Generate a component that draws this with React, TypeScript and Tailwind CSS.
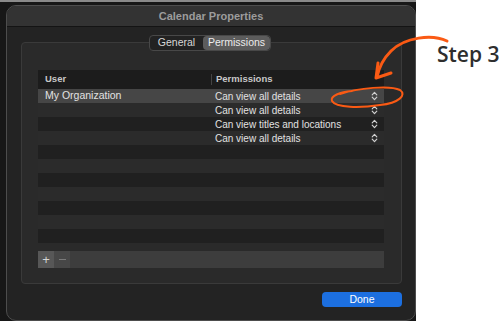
import React from 'react';

const rows = [
  { user: 'My Organization', perm: 'Can view all details' },
  { user: '', perm: 'Can view all details' },
  { user: '', perm: 'Can view titles and locations' },
  { user: '', perm: 'Can view all details' },
];

const Stepper: React.FC = () => (
  <svg width="7" height="10" viewBox="0 0 7 10" className="shrink-0">
    <path d="M1.2 3.8 L3.5 1.4 L5.8 3.8" fill="none" stroke="#cfcfcf" strokeWidth="1.2" strokeLinecap="round" strokeLinejoin="round" />
    <path d="M1.2 6.2 L3.5 8.6 L5.8 6.2" fill="none" stroke="#cfcfcf" strokeWidth="1.2" strokeLinecap="round" strokeLinejoin="round" />
  </svg>
);

const App: React.FC = () => {
  const lines = Array.from({ length: 11 }, (_, i) => rows[i] ?? null);

  return (
    <div
      className="relative w-[500px] h-[325px] bg-white flex overflow-hidden"
      style={{ fontFamily: '"Liberation Sans", Arial, sans-serif' }}
    >
      {/* dark desktop behind the sheet */}
      <div className="w-[416px] h-[321px] bg-[#171717] border-t-[2px] border-[#8a8a8a] pt-[3px] pl-[6px]">
        <div className="w-[410px] h-[316px] rounded-[10px] border border-[#4d4d4d] bg-[#232323] flex flex-col overflow-hidden">
          {/* title bar */}
          <div className="h-[21px] bg-[#333333] border-b border-[#141414] flex items-center justify-center shrink-0">
            <span className="text-[11px] font-bold text-[#9c9c9c]">Calendar Properties</span>
          </div>

          {/* group box */}
          <div className="relative mt-[15px] ml-[14px] w-[381px] h-[242px] rounded-[4px] border border-[#3a3a3a] bg-[#2a2a2a] flex flex-col">
            {/* tabs */}
            <div className="absolute -top-[8px] left-[127px] h-[16px] flex rounded-[4px] border border-[#484848] bg-[#222222] overflow-hidden text-[10.5px]">
              <div className="w-[53px] flex items-center justify-center text-[#d8d8d8]">General</div>
              <div className="w-[67px] flex items-center justify-center bg-[#5c5c5c] rounded-[4px] text-[#ececec]">Permissions</div>
            </div>

            {/* table */}
            <div className="mt-[27px] ml-[16px] w-[346px] flex flex-col">
              <div className="h-[19px] bg-[#1c1c1c] flex items-center text-[9.5px] font-bold text-[#c8c8c8]">
                <div className="w-[173px] pl-[7px]">User</div>
                <div className="h-[11px] w-px bg-[#444444]" />
                <div className="pl-[4px]">Permissions</div>
              </div>
              {lines.map((r, i) => (
                <div
                  key={i}
                  className={`h-[14px] flex items-center text-[10px] text-[#e2e2e2] ${
                    i === 0 ? 'bg-[#464646]' : i % 2 === 1 ? 'bg-[#2b2b2b]' : 'bg-[#202020]'
                  }`}
                >
                  <div className="w-[174px] pl-[7px] text-[10.5px]">{r?.user}</div>
                  {r && (
                    <div className="flex-1 flex items-center justify-between pl-[3px] pr-[6px]">
                      <span>{r.perm}</span>
                      <Stepper />
                    </div>
                  )}
                </div>
              ))}
            </div>

            {/* add / remove bar */}
            <div className="mt-[8px] ml-[16px] w-[346px] h-[17px] bg-[#3d3d3d] flex">
              <div className="w-[16px] h-full bg-[#575757] flex items-center justify-center text-[#d4d4d4] text-[13px] leading-none">+</div>
              <div className="w-[16px] h-full bg-[#474747] flex items-center justify-center">
                <div className="w-[7px] h-px bg-[#7a7a7a]" />
              </div>
            </div>
          </div>

          {/* footer */}
          <div className="flex justify-end pr-[13px] mt-[8px]">
            <button className="w-[80px] h-[15px] rounded-[4px] bg-[#1c6fe0] text-white text-[10.5px] flex items-center justify-center">
              Done
            </button>
          </div>
        </div>
      </div>

      {/* annotation */}
      <div
        className="absolute left-[437px] top-[44px] text-[21px] font-semibold text-[#2e2e2e] leading-none"
        style={{ fontFamily: '"Open Sans", sans-serif' }}
      >
        Step 3
      </div>
      <svg className="absolute inset-0 pointer-events-none" width="500" height="325" viewBox="0 0 500 325">
        <g fill="none" stroke="#fa5a14" strokeLinecap="round" strokeLinejoin="round">
          <path d="M447 41 C432 34 405 37 391 51 C384 58 379 67 377 77" strokeWidth="3" />
          <path d="M378 63 L376 78 L391 73" strokeWidth="3" />
          <path d="M340 94 C358 88 390 85 400 90 C407 95 399 103 380 105 C360 108 336 108 332 101 C330 96 340 92 352 91" strokeWidth="2" />
        </g>
      </svg>
    </div>
  );
};

export default App;
